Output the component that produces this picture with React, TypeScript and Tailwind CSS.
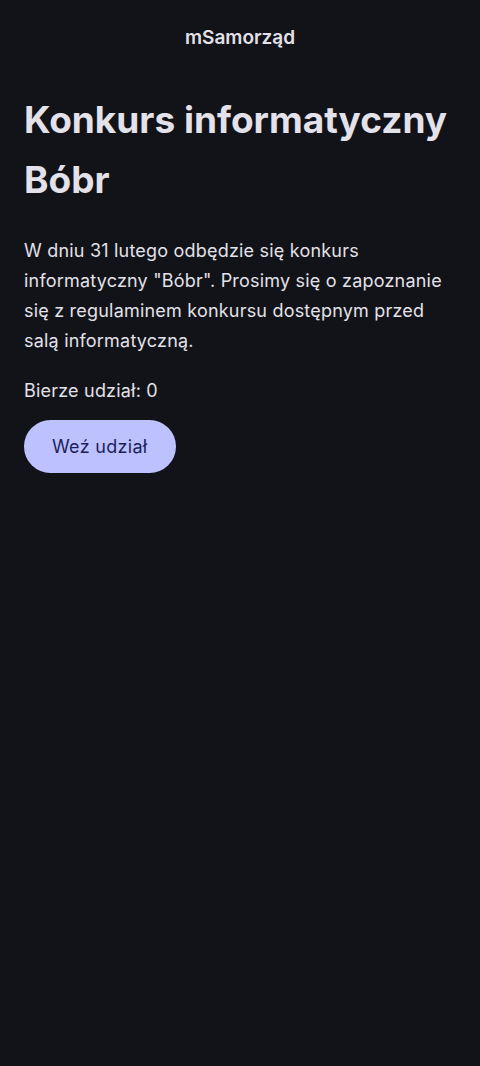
export default function App() {
  return (
    <div
      className="min-h-[1066px] bg-[#121318] text-[#e3e1e9]"
      style={{ fontFamily: 'Inter, "Noto Sans", sans-serif' }}
    >
      {/* Top bar */}
      <header className="flex justify-center pt-[26px]">
        <span className="text-[19px] leading-6 font-semibold">mSamorząd</span>
      </header>

      <main className="px-6">
        <h1 className="mt-[40px] text-[37px] leading-[60px] font-bold">
          Konkurs informatyczny Bóbr
        </h1>

        <p className="mt-[26px] text-[18px] leading-[30px] tracking-[0.2px]">
          W dniu 31 lutego odbędzie się konkurs informatyczny "Bóbr". Prosimy
          się o zapoznanie się z regulaminem konkursu dostępnym przed salą
          informatyczną.
        </p>

        <p className="mt-[20px] text-[18px] leading-[30px] tracking-[0.2px]">
          Bierze udział: 0
        </p>

        <button className="mt-[14px] h-[53px] rounded-full bg-[#bdc2ff] px-7 text-[18px] tracking-[0.3px] text-[#1b1f5c]">
          Weź udział
        </button>
      </main>
    </div>
  )
}
